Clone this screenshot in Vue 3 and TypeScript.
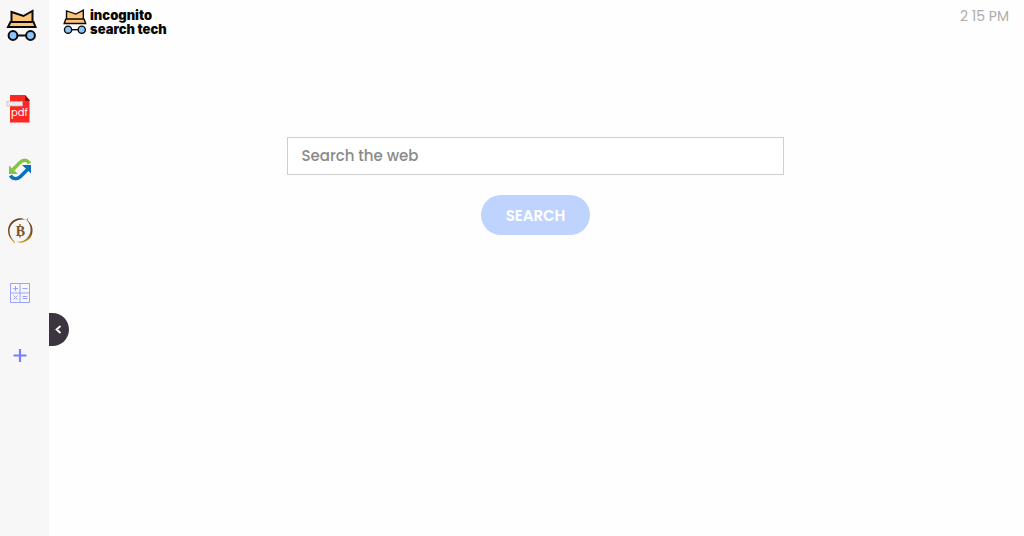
<script setup lang="ts">
import { ref } from 'vue'

const query = ref<string>('')
const time = ref<string>('2 15 PM')
</script>

<template>
  <div class="page">
    <aside class="sidebar">
      <a class="mark" href="#" aria-label="Home">
        <svg width="32" height="32" viewBox="0 0 32 32" fill="none" stroke="#0b0b0b" stroke-width="2" stroke-linejoin="miter">
          <path d="M5.500 13V3L17.500 7L26.500 2V13Z" fill="#ffc477" />
          <path d="M4.500 13H27.500L29.500 18H2Z" fill="#ffc477" />
          <path d="M11.500 26.500H20.500" />
          <circle cx="7" cy="26.500" r="4.400" fill="#8bc5ff" />
          <circle cx="24.500" cy="26.500" r="4.400" fill="#8bc5ff" />
        </svg>
      </a>
      <nav class="apps">
        <a href="#" aria-label="PDF">
          <svg width="28" height="30" viewBox="0 -1 28 30">
            <path d="M4 1H19L23.500 6V28.500H4Z" fill="#fb2824" />
            <path d="M19 1L23.500 6V7H19Z" fill="#86141a" />
            <rect x="1" y="7.500" width="15.500" height="4.500" fill="#eee9e9" stroke="#cbb4b4" stroke-width=".7" />
            <text x="13.500" y="22" text-anchor="middle" class="pdf">pdf</text>
          </svg>
        </a>
        <a href="#" aria-label="Convert">
          <svg width="28" height="30" viewBox="0 1 28 30" fill="none" stroke-width="3.500">
            <path d="M23.500 9.500C21.500 5.500 17 5.500 14 8.500L7 15.500" stroke="#83c441" />
            <path d="M3 11.500V20H12Z" fill="#83c441" />
            <path d="M4.500 21.500C6.500 25.500 11.500 25.500 14.500 22.500L21.500 15.500" stroke="#0870bd" />
            <path d="M16 11H25V19.500Z" fill="#0870bd" />
          </svg>
        </a>
        <a href="#" aria-label="Bitcoin">
          <svg width="28" height="30" viewBox="0 2 28 30" fill="none">
            <defs>
              <linearGradient id="coin" x1="0" y1="0" x2="0" y2="1">
                <stop offset="0" stop-color="#63401f" />
                <stop offset=".65" stop-color="#805025" />
                <stop offset="1" stop-color="#d3a318" />
              </linearGradient>
            </defs>
            <path d="M20 5C12 0 2 6.500 2 15.500C2 20.500 4.500 24.500 8 27L7.500 29L9 27C5.500 24 3.500 20 3.500 15.500C4 8 12 3 20 5Z" fill="url(#coin)" />
            <path d="M20.500 5L21.500 2.500L21.500 5.500C25 8 27 12 26.500 16.500C26 25 17 30 9.500 26.500C17 28 23.500 23 24.500 16C25 11.500 23.500 8 20.500 5Z" fill="url(#coin)" />
            <text x="14.500" y="20.500" text-anchor="middle" class="coin">B</text>
            <path d="M14 9V11.500M14 20V22.500" stroke="#805025" stroke-width="1.300" />
          </svg>
        </a>
        <a href="#" aria-label="Calculator">
          <svg width="28" height="30" viewBox="0 1 28 30" fill="none" stroke="#9aa2fb" stroke-width="1">
            <path d="M4.500 5.500H23.500V24.500H4.500ZM14 5.500V24.500M4.500 15H23.500" />
            <path d="M7 10.500H12M9.500 8V13M16.500 10.500H21.500M7.500 17.500L11.500 21.500M11.500 17.500L7.500 21.500M16.500 18.500H21.500M16.500 20.500H21.500" />
          </svg>
        </a>
        <a href="#" aria-label="Add">
          <svg width="28" height="30" viewBox="0 0 28 30" fill="none" stroke="#7680fa" stroke-width="2.200">
            <path d="M7.500 14.500H20.500M14 8V21" />
          </svg>
        </a>
      </nav>
      <button class="toggle" type="button" aria-label="Collapse sidebar">
        <svg width="8" height="10" viewBox="0 0 8 10" fill="none" stroke="#fff" stroke-width="1.8"><path d="M5.500 1L1.500 4.500L5.500 8" /></svg>
      </button>
    </aside>
    <div class="content">
      <header class="top">
        <a class="brand" href="#">
          <svg width="25" height="27" viewBox="0 0 32 34" fill="none" stroke="#0b0b0b" stroke-width="1.8" stroke-linejoin="miter">
            <path d="M4.500 14V3.500L16.500 7.500L26 2.500V14Z" fill="#ffc477" />
            <path d="M3.500 14H27L29 19.500H1.500Z" fill="#ffc477" />
            <path d="M11 27.500H20" />
            <circle cx="6.500" cy="27.500" r="4.600" fill="#8bc5ff" />
            <circle cx="24" cy="27.500" r="4.600" fill="#8bc5ff" />
          </svg>
          <span>incognito<br />search tech</span>
        </a>
        <time class="clock">{{ time }}</time>
      </header>
      <main>
        <form class="search" @submit.prevent>
          <input v-model="query" type="text" placeholder="Search the web" aria-label="Search the web" />
          <button type="submit">SEARCH</button>
        </form>
      </main>
    </div>
  </div>
</template>

<style>
body {
  margin: 0;
  background: #fefefe;
}
</style>

<style scoped>
.page {
  display: flex;
  min-height: 100vh;
  font-family: Poppins, Inter, sans-serif;
}
.sidebar {
  position: relative;
  box-sizing: border-box;
  flex: 0 0 49px;
  padding: 9px 6px;
  background: #f7f7f7;
}
.mark,
.apps a {
  display: block;
}
.mark svg,
.apps svg,
.brand svg,
.toggle svg {
  display: block;
}
.apps {
  display: flex;
  flex-direction: column;
  gap: 32px;
  margin-top: 52px;
}
.pdf {
  font: 10px Poppins, sans-serif;
  fill: #fff;
}
.coin {
  font: 14px "Liberation Serif", serif;
  font-weight: 700;
  fill: #805025;
}
.toggle {
  position: absolute;
  top: 313px;
  left: 100%;
  display: grid;
  place-items: center;
  width: 20px;
  height: 33px;
  padding: 0;
  border: 0;
  border-radius: 0 17px 17px 0;
  background: #3c3541;
}
.content {
  flex: 1;
  min-width: 0;
}
.top {
  display: flex;
  justify-content: space-between;
  align-items: flex-start;
  padding: 8px 15px 0 14px;
}
.brand {
  display: flex;
  gap: 2px;
  color: #080808;
  font-family: Inter, sans-serif;
  font-size: 13px;
  font-weight: 900;
  line-height: 14px;
  text-decoration: none;
}
.clock {
  color: #adadad;
  font-size: 14px;
  line-height: 17px;
}
.search {
  display: flex;
  flex-direction: column;
  align-items: center;
  gap: 20px;
  margin: 101px 2px 0 0;
}
.search input {
  box-sizing: border-box;
  width: 51%;
  height: 38px;
  padding: 0 13px 2px;
  border: 1px solid #cfcfcf;
  border-radius: 0;
  outline: 0;
  background: #fff;
  color: #555;
  font: inherit;
  font-size: 15px;
  font-weight: 500;
}
.search input::placeholder {
  color: #8a8a8a;
  opacity: 1;
}
.search button {
  height: 40px;
  padding: 0 25px;
  border: 0;
  border-radius: 20px;
  background: #bfd3ff;
  color: #fff;
  font: inherit;
  font-size: 15px;
  font-weight: 600;
}
</style>
